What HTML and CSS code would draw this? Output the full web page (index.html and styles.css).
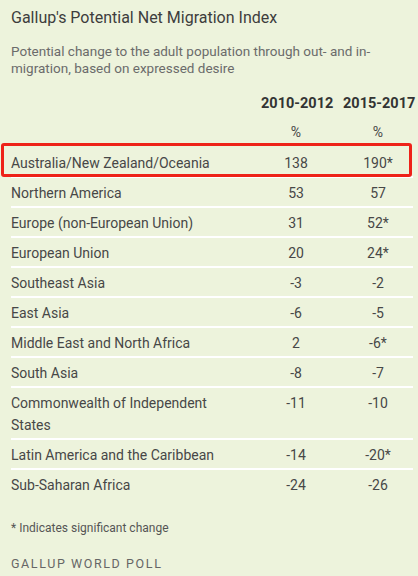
FILE: index.html
```html
<!DOCTYPE html>
<html lang="en">
<head>
<meta charset="utf-8">
<title>Gallup's Potential Net Migration Index</title>
<link rel="stylesheet" href="styles.css">
</head>
<body>
<div class="card">
  <h1 class="title">Gallup's Potential Net Migration Index</h1>
  <p class="subtitle">Potential change to the adult population through out- and in-migration, based on expressed desire</p>
  <div class="table">
    <div class="row head">
      <span class="name"></span>
      <span class="val">2010-2012</span>
      <span class="val">2015-2017</span>
    </div>
    <div class="row unit">
      <span class="name"></span>
      <span class="val">%</span>
      <span class="val">%</span>
    </div>
    <div class="row data highlight"><span class="name">Australia/New Zealand/Oceania</span><span class="val">138</span><span class="val">190*</span></div>
    <div class="row data"><span class="name">Northern America</span><span class="val">53</span><span class="val">57</span></div>
    <div class="row data"><span class="name">Europe (non-European Union)</span><span class="val">31</span><span class="val">52*</span></div>
    <div class="row data"><span class="name">European Union</span><span class="val">20</span><span class="val">24*</span></div>
    <div class="row data"><span class="name">Southeast Asia</span><span class="val">-3</span><span class="val">-2</span></div>
    <div class="row data"><span class="name">East Asia</span><span class="val">-6</span><span class="val">-5</span></div>
    <div class="row data"><span class="name">Middle East and North Africa</span><span class="val">2</span><span class="val">-6*</span></div>
    <div class="row data"><span class="name">South Asia</span><span class="val">-8</span><span class="val">-7</span></div>
    <div class="row data"><span class="name">Commonwealth of Independent States</span><span class="val">-11</span><span class="val">-10</span></div>
    <div class="row data"><span class="name">Latin America and the Caribbean</span><span class="val">-14</span><span class="val">-20*</span></div>
    <div class="row data last"><span class="name">Sub-Saharan Africa</span><span class="val">-24</span><span class="val">-26</span></div>
  </div>
  <p class="note">* Indicates significant change</p>
  <p class="source">GALLUP WORLD POLL</p>
</div>
</body>
</html>
```
FILE: styles.css
```css
html, body {
  margin: 0;
  padding: 0;
  background: #edf3dc;
}
body {
  font-family: Roboto, "Noto Sans", "Liberation Sans", sans-serif;
  color: #474747;
  width: 418px;
  height: 576px;
  overflow: hidden;
}
.card {
  padding: 6px 5px 0 11px;
}
.title {
  margin: 0;
  font-size: 16px;
  font-weight: 400;
  line-height: 24px;
  color: #3d3d3d;
}
.subtitle {
  margin: 13px 0 0;
  font-size: 13.5px;
  line-height: 17px;
  color: #6b6b6b;
  width: 385px;
}
.table {
  margin-top: 17px;
}
.row {
  display: grid;
  grid-template-columns: 1fr 70px 70px;
  column-gap: 12px;
  align-items: start;
}
.val {
  text-align: center;
  white-space: nowrap;
}
.head {
  font-weight: 700;
  font-size: 14.5px;
  line-height: 20px;
  color: #333;
}
.unit {
  font-size: 14px;
  line-height: 20px;
  margin-top: 8px;
  padding-bottom: 6px;
}
.data {
  font-size: 14px;
  line-height: 22px;
  padding: 4px 0 2px;
  border-bottom: 2px solid #ffffff;
}
.data .name {
  padding-right: 20px;
}
.data.last {
  border-bottom: none;
}
.highlight {
  position: relative;
}
.highlight::after {
  content: "";
  position: absolute;
  left: -10px;
  right: 1px;
  top: -5px;
  bottom: -1px;
  border: 3px solid #ee2219;
  border-radius: 3px;
}
.note {
  margin: 22px 0 0;
  font-size: 12px;
  line-height: 16px;
  color: #555;
}
.source {
  margin: 20px 0 0;
  font-size: 12.5px;
  line-height: 16px;
  letter-spacing: 1.6px;
  color: #666;
}
```
